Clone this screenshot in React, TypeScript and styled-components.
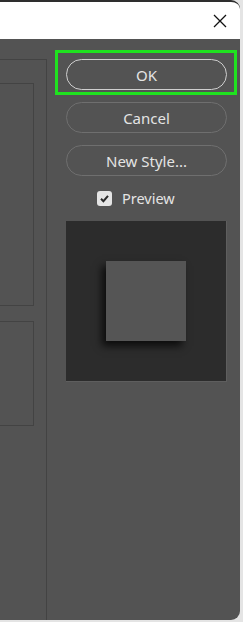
import React from "react";
import styled, { createGlobalStyle } from "styled-components";

const Global = createGlobalStyle`
  html, body { margin: 0; padding: 0; background: #e4e4e4; }
  body { font-family: "Noto Sans", "Open Sans", "Liberation Sans", sans-serif; }
`;

const Page = styled.div`
  width: 243px;
  height: 622px;
  overflow: hidden;
  background: #e4e4e4;
`;

const Window = styled.div`
  width: 240px;
  height: 620px;
  border-top: 2px solid #2e2e2e;
  border-radius: 0 9px 9px 0;
  overflow: hidden;
  display: flex;
  flex-direction: column;
  background: #535353;
  box-sizing: border-box;
`;

const TitleBar = styled.div`
  height: 37px;
  flex: none;
  background: #ffffff;
  display: flex;
  align-items: center;
  justify-content: flex-end;
  padding-right: 13px;
`;

const Body = styled.div`
  flex: 1;
  display: flex;
  align-items: flex-start;
  padding-top: 20px;
`;

const LeftPanel = styled.div`
  width: 46px;
  height: 548px;
  border-top: 1px solid #434343;
  border-right: 1px solid #434343;
  border-bottom: 1px solid #434343;
  display: flex;
  flex-direction: column;
  padding-top: 23px;
  gap: 15px;
  flex: none;
`;

const InnerBox = styled.div<{ $h: number }>`
  width: 33px;
  height: ${(p) => p.$h}px;
  border-top: 1px solid #434343;
  border-right: 1px solid #434343;
  border-bottom: 1px solid #434343;
`;

const Column = styled.div`
  margin-left: 19px;
  width: 161px;
  display: flex;
  flex-direction: column;
  align-items: center;
  position: relative;
`;

const Highlight = styled.div`
  position: absolute;
  left: -11px;
  top: -9px;
  width: 182px;
  height: 45px;
  border: 3px solid #1fe21f;
  box-sizing: border-box;
  pointer-events: none;
`;

const PillButton = styled.button<{ $primary?: boolean }>`
  width: 161px;
  height: 31px;
  margin-bottom: 12px;
  border-radius: 16px;
  background: transparent;
  border: ${(p) => (p.$primary ? "1.5px solid #cfcfcf" : "1px solid #6f6f6f")};
  color: #e4e4e4;
  font-family: inherit;
  font-size: 15px;
  display: flex;
  align-items: center;
  justify-content: center;
  padding: 0;
  box-sizing: border-box;
`;

const CheckRow = styled.label`
  align-self: flex-start;
  display: flex;
  align-items: center;
  gap: 10px;
  height: 18px;
  margin-top: 1px;
  margin-left: 31px;
  color: #e4e4e4;
  font-size: 14.5px;
`;

const CheckBox = styled.span`
  width: 15px;
  height: 15px;
  border-radius: 3px;
  background: #e4e4e4;
  display: flex;
  align-items: center;
  justify-content: center;
`;

const PreviewFrame = styled.div`
  margin-top: 14px;
  width: 161px;
  height: 161px;
  background: #2c2c2c;
  border-right: 1px solid #5e5e5e;
  border-bottom: 1px solid #5e5e5e;
  box-sizing: border-box;
  display: flex;
  align-items: center;
  justify-content: center;
`;

const Swatch = styled.div`
  width: 80px;
  height: 80px;
  background: #555555;
  box-shadow: -4px 5px 8px rgba(0, 0, 0, 0.75);
`;

export default function App() {
  return (
    <Page>
      <Global />
      <Window>
        <TitleBar>
          <svg width="14" height="14" viewBox="0 0 14 14">
            <path d="M1 1 L13 13 M13 1 L1 13" stroke="#111" strokeWidth="1.3" />
          </svg>
        </TitleBar>
        <Body>
          <LeftPanel>
            <InnerBox $h={221} />
            <InnerBox $h={103} />
          </LeftPanel>
          <Column>
            <Highlight />
            <PillButton $primary>OK</PillButton>
            <PillButton>Cancel</PillButton>
            <PillButton>New Style...</PillButton>
            <CheckRow>
              <CheckBox>
                <svg width="11" height="11" viewBox="0 0 11 11">
                  <path d="M2 5.8 L4.4 8.2 L9 2.8" stroke="#2a2a2a" strokeWidth="2" fill="none" />
                </svg>
              </CheckBox>
              Preview
            </CheckRow>
            <PreviewFrame>
              <Swatch />
            </PreviewFrame>
          </Column>
        </Body>
      </Window>
    </Page>
  );
}
